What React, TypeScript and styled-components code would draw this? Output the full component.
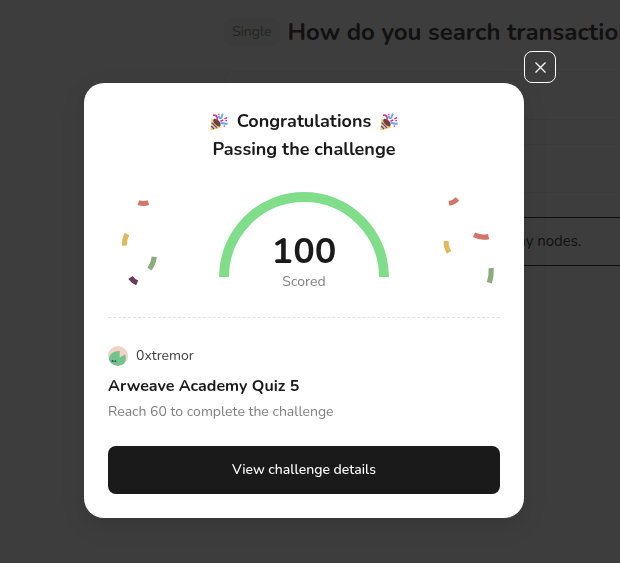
import React from "react";
import styled, { createGlobalStyle } from "styled-components";

const GlobalStyle = createGlobalStyle`
  * { box-sizing: border-box; }
  body {
    margin: 0;
    background: #fff;
    color: #1a1a1a;
    font-family: Nunito, "Noto Sans", sans-serif;
    overflow: hidden;
  }
  h1, h2, h3, p { margin: 0; }
  button { font: inherit; cursor: pointer; }
`;

const QuizPage = styled.main`
  min-height: 100vh;
  padding: 16px 0 0 224px;
  overflow: hidden;
`;

const Question = styled.header`
  display: flex;
  align-items: center;
  gap: 8px;
  height: 32px;
  white-space: nowrap;
`;

const Tag = styled.span`
  padding: 0 8px;
  border-radius: 8px;
  background: #edf1ee;
  color: #5f8a6a;
  font-size: 14px;
  line-height: 28px;
`;

const QuestionTitle = styled.h1`
  font-size: 24px;
  font-weight: 700;
  line-height: 32px;
`;

const Options = styled.div`
  display: grid;
  gap: 24px;
  margin-top: 23px;
`;

const Option = styled.div<{ $selected?: boolean }>`
  width: 640px;
  height: 49px;
  padding: 12px 16px;
  border: 1px solid ${(p) => (p.$selected ? "#1a1a1a" : "#ececec")};
  border-radius: 8px;
  font-size: 15px;
  line-height: 22px;
  white-space: nowrap;
`;

const Overlay = styled.div`
  position: fixed;
  inset: 0;
  display: flex;
  justify-content: center;
  align-items: flex-start;
  padding: 83px 36px 24px 24px;
  background: rgba(15, 15, 15, 0.808);
`;

const Dialog = styled.section`
  position: relative;
  width: 100%;
  max-width: 440px;
  padding: 24px;
  border-radius: 20px;
  background: #fff;
  box-shadow: 0 8px 24px rgba(0, 0, 0, 0.12);
`;

const CloseButton = styled.button`
  position: absolute;
  left: 100%;
  bottom: 100%;
  display: grid;
  place-items: center;
  width: 32px;
  height: 32px;
  padding: 0;
  border: 1px solid #fff;
  border-radius: 8px;
  background: transparent;
`;

const Heading = styled.h2`
  font-size: 18px;
  font-weight: 700;
  line-height: 28px;
  text-align: center;
`;

const HeadingLine = styled.span`
  display: flex;
  justify-content: center;
  align-items: center;
  gap: 8px;
`;

const Celebration = styled.div`
  display: flex;
  justify-content: space-between;
  height: 102px;
  margin-top: 28px;
`;

const Gauge = styled.div`
  display: grid;
  justify-items: center;
  & > * { grid-area: 1 / 1; }
`;

const Score = styled.div`
  display: flex;
  flex-direction: column;
  align-items: center;
  padding-top: 40px;
`;

const ScoreValue = styled.strong`
  font-size: 36px;
  font-weight: 700;
  line-height: 42px;
`;

const ScoreLabel = styled.span`
  color: #808080;
  font-size: 14px;
  line-height: 18px;
`;

const Divider = styled.hr`
  margin: 24px 0;
  border: 0;
  border-top: 1px dashed #e2e2e2;
`;

const Author = styled.div`
  display: flex;
  align-items: center;
  gap: 8px;
  height: 28px;
  color: #404040;
  font-size: 14px;
  line-height: 20px;
`;

const QuizName = styled.h3`
  margin-top: 4px;
  font-size: 16px;
  font-weight: 700;
  line-height: 24px;
`;

const Requirement = styled.p`
  margin-top: 4px;
  color: #808080;
  font-size: 14px;
  line-height: 20px;
`;

const DetailsButton = styled.button`
  width: 100%;
  height: 48px;
  margin-top: 24px;
  padding: 0;
  border: 0;
  border-radius: 8px;
  background: #1a1a1a;
  color: #fff;
  font-size: 14px;
  font-weight: 500;
  line-height: 20px;
`;

const Popper = () => (
  <svg width="20" height="18" viewBox="0 0 20 18" aria-hidden="true">
    <path d="M3.2 8 10.8 15.2 2 17.8Z" fill="#f8d15c" stroke="#f8d15c" strokeWidth="1.4" />
    <path d="M2.8 10.6 8 16M2.2 14 5 17" stroke="#5b46c9" strokeWidth="1.3" />
    <path d="M4.4 7.4C5.2 5.8 8 7 9.6 8.6 11.4 10.4 12.4 13 11.2 14.2 9.8 15 7.6 13.8 6 12 4.6 10.6 3.8 8.6 4.4 7.4Z" fill="#70413a" />
    <path d="M7.6 8.4C8.8 6.6 8.4 4.4 6.2 3" fill="none" stroke="#e0218a" strokeWidth="1.5" />
    <path d="M9.6 3.6C10 7 12.4 6.8 12.8 4.4 13 3 13.4 2.2 14.2 1.8" fill="none" stroke="#6ea8f2" strokeWidth="2" />
    <path d="M11.4 11.4C13.4 9.8 14.6 12.4 18.6 11.6" fill="none" stroke="#6ea8f2" strokeWidth="2" />
    <path d="M11.4 9.4 14.2 8M15.4 7 18 5.6" stroke="#e0218a" strokeWidth="1.4" />
    <path d="M4 2.4h2V4H4zM16.4 8h1.6v1.3h-1.6zM9.2 1.8h1.3v1.3H9.2zM14.6 13.6H16v1.2h-1.4z" fill="#e0218a" />
  </svg>
);

const ConfettiLeft = () => (
  <svg width="111" height="102" viewBox="0 -1 111 102" fill="none" aria-hidden="true">
    <path d="M30.4 10.6Q35.5 12.2 40.4 10.6" stroke="#d27667" strokeWidth="5" />
    <path d="M19 42Q16.2 47 16.4 53.6" stroke="#e2b85c" strokeWidth="5" />
    <path d="M46.2 64.8Q45.4 72 41.4 77" stroke="#8bad7e" strokeWidth="5.2" />
    <path d="M22.4 85.4Q25 89 29.2 90.8" stroke="#6b3a5b" strokeWidth="5.2" />
  </svg>
);

const ConfettiRight = () => (
  <svg width="111" height="102" viewBox="0 -1 111 102" fill="none" aria-hidden="true">
    <path d="M60 11.4Q65 10.4 68.5 6.8" stroke="#d27667" strokeWidth="4.8" />
    <path d="M85 42.8Q92 46.4 99.6 44.6" stroke="#d27667" strokeWidth="5.2" />
    <path d="M57.2 49Q56.6 55 60.2 60.4" stroke="#e2b85c" strokeWidth="5" />
    <path d="M102.2 76Q102.6 84 100.4 90.8" stroke="#8bad7e" strokeWidth="5.2" />
  </svg>
);

const Avatar = () => (
  <svg width="20" height="20" viewBox="0 0 20 20" aria-hidden="true">
    <clipPath id="avatar-clip"><circle cx="10" cy="10" r="10" /></clipPath>
    <g clipPath="url(#avatar-clip)">
      <rect width="20" height="20" fill="#f2d2c5" />
      <path d="M11.8 5 11.6 11.6 17 8.6C19 13 17.5 20 10 20 4 20 .6 17 1 12.4 1.4 8 6 4.6 11.8 5Z" fill="#6fc58c" />
      <circle cx="4.5" cy="15" r="1" fill="#34405f" />
      <circle cx="7.3" cy="15.2" r=".9" fill="#34405f" />
      <circle cx="8.7" cy="17.2" r=".8" fill="#d6825c" />
    </g>
  </svg>
);

export default function App() {
  return (
    <>
      <GlobalStyle />
      <QuizPage>
        <Question>
          <Tag>Single</Tag>
          <QuestionTitle>How do you search transactions</QuestionTitle>
        </Question>
        <Options>
          <Option />
          <Option />
          <Option $selected>Query the gateway that is indexed by many nodes.</Option>
        </Options>
      </QuizPage>
      <Overlay>
        <Dialog role="dialog" aria-modal="true" aria-labelledby="result-title">
          <CloseButton type="button" aria-label="Close">
            <svg width="12" height="12" viewBox="0 0 12 12" stroke="#fff" strokeWidth="1.3" aria-hidden="true">
              <path d="M1.5 1.5 11.5 11.5M11.5 1.5 1.5 11.5" />
            </svg>
          </CloseButton>
          <Heading id="result-title">
            <HeadingLine><Popper />Congratulations<Popper /></HeadingLine>
            <HeadingLine>Passing the challenge</HeadingLine>
          </Heading>
          <Celebration>
            <ConfettiLeft />
            <Gauge>
              <svg width="170" height="86" viewBox="0 -1 170 86" fill="none" aria-hidden="true">
                <path d="M5 85A80 80 0 0 1 165 85" stroke="#80de8a" strokeWidth="10" />
              </svg>
              <Score>
                <ScoreValue>100</ScoreValue>
                <ScoreLabel>Scored</ScoreLabel>
              </Score>
            </Gauge>
            <ConfettiRight />
          </Celebration>
          <Divider />
          <Author><Avatar />0xtremor</Author>
          <QuizName>Arweave Academy Quiz 5</QuizName>
          <Requirement>Reach 60 to complete the challenge</Requirement>
          <DetailsButton type="button">View challenge details</DetailsButton>
        </Dialog>
      </Overlay>
    </>
  );
}
